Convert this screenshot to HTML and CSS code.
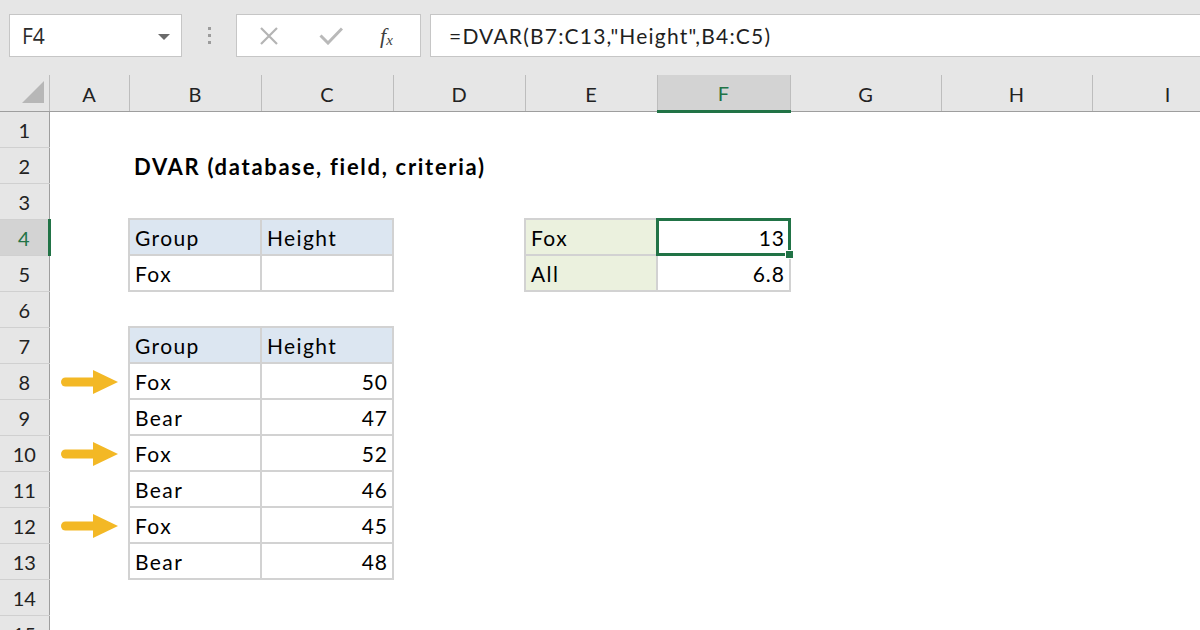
FILE: index.html
```html
<!DOCTYPE html>
<html lang="en">
<head>
    <meta charset="UTF-8">
    <title>DVAR example</title>
    <link rel="stylesheet" href="styles.css">
</head>
<body>
    <div class="formula-bar">
        <div class="name-box">
            <span>F4</span>
            <span class="caret"></span>
        </div>
        <div class="grip"><i></i><i></i><i></i></div>
        <div class="fx-buttons">
            <svg class="btn-cancel" width="20" height="20" viewBox="0 0 20 20">
                <path d="M2 2 L18 18 M18 2 L2 18" stroke="#b4b4b4" stroke-width="2.2" fill="none"/>
            </svg>
            <svg class="btn-enter" width="24" height="18" viewBox="0 0 24 18">
                <path d="M1.5 8.5 L9 16 L23 1.5" stroke="#b9b9b9" stroke-width="3" fill="none"/>
            </svg>
            <span class="fx">f<sub>x</sub></span>
        </div>
        <div class="formula">=DVAR(B7:C13,"Height",B4:C5)</div>
    </div>

    <div class="sheet-wrap">
        <table class="sheet">
            <colgroup>
                <col class="c-rh"><col class="c-a"><col class="c-std"><col class="c-std"><col class="c-std"><col class="c-std"><col class="c-f"><col class="c-wide"><col class="c-wide"><col class="c-wide">
            </colgroup>
            <tr class="col-heads">
                <th class="corner"><span class="select-all"></span></th>
                <th>A</th><th>B</th><th>C</th><th>D</th><th>E</th><th class="sel">F</th><th>G</th><th>H</th><th>I</th>
            </tr>
            <tr><th class="rh">1</th><td></td><td></td><td></td><td></td><td></td><td></td><td></td><td></td><td></td></tr>
            <tr><th class="rh">2</th><td></td><td class="title">DVAR (database, field, criteria)</td><td></td><td></td><td></td><td></td><td></td><td></td><td></td></tr>
            <tr><th class="rh">3</th><td></td><td></td><td></td><td></td><td></td><td></td><td></td><td></td><td></td></tr>
            <tr><th class="rh sel">4</th><td></td><td class="box head">Group</td><td class="box head">Height</td><td></td><td class="box crit">Fox</td><td class="box num active">13</td><td></td><td></td><td></td></tr>
            <tr><th class="rh">5</th><td></td><td class="box">Fox</td><td class="box"></td><td></td><td class="box crit">All</td><td class="box num">6.8</td><td></td><td></td><td></td></tr>
            <tr><th class="rh">6</th><td></td><td></td><td></td><td></td><td></td><td></td><td></td><td></td><td></td></tr>
            <tr><th class="rh">7</th><td></td><td class="box head">Group</td><td class="box head">Height</td><td></td><td></td><td></td><td></td><td></td><td></td></tr>
            <tr><th class="rh">8</th><td class="mark"><svg class="arrow" width="58" height="26" viewBox="0 0 58 26"><path d="M4.5 13 H36" stroke="#f3b825" stroke-width="9" stroke-linecap="round"/><path d="M32 1 L57 13 L32 25 Z" fill="#f3b825"/></svg></td><td class="box">Fox</td><td class="box num">50</td><td></td><td></td><td></td><td></td><td></td><td></td></tr>
            <tr><th class="rh">9</th><td></td><td class="box">Bear</td><td class="box num">47</td><td></td><td></td><td></td><td></td><td></td><td></td></tr>
            <tr><th class="rh">10</th><td class="mark"><svg class="arrow" width="58" height="26" viewBox="0 0 58 26"><path d="M4.5 13 H36" stroke="#f3b825" stroke-width="9" stroke-linecap="round"/><path d="M32 1 L57 13 L32 25 Z" fill="#f3b825"/></svg></td><td class="box">Fox</td><td class="box num">52</td><td></td><td></td><td></td><td></td><td></td><td></td></tr>
            <tr><th class="rh">11</th><td></td><td class="box">Bear</td><td class="box num">46</td><td></td><td></td><td></td><td></td><td></td><td></td></tr>
            <tr><th class="rh">12</th><td class="mark"><svg class="arrow" width="58" height="26" viewBox="0 0 58 26"><path d="M4.5 13 H36" stroke="#f3b825" stroke-width="9" stroke-linecap="round"/><path d="M32 1 L57 13 L32 25 Z" fill="#f3b825"/></svg></td><td class="box">Fox</td><td class="box num">45</td><td></td><td></td><td></td><td></td><td></td><td></td></tr>
            <tr><th class="rh">13</th><td></td><td class="box">Bear</td><td class="box num">48</td><td></td><td></td><td></td><td></td><td></td><td></td></tr>
            <tr><th class="rh">14</th><td></td><td></td><td></td><td></td><td></td><td></td><td></td><td></td><td></td></tr>
            <tr><th class="rh">15</th><td></td><td></td><td></td><td></td><td></td><td></td><td></td><td></td><td></td></tr>
        </table>
    </div>
</body>
</html>
```

FILE: styles.css
```css
body {
    margin: 0;
    background-color: white;
    font-family: Lato, "Liberation Sans", sans-serif;
    overflow: hidden;
    height: 630px;
}
.formula-bar {
    display: flex;
    align-items: flex-start;
    height: 75px;
    box-sizing: border-box;
    padding: 14px 0 0 9px;
    background-color: #e6e6e6;
}
.name-box {
    width: 173px;
    height: 43px;
    box-sizing: border-box;
    border: 1px solid #c6c6c6;
    background-color: white;
    display: flex;
    align-items: center;
    justify-content: space-between;
    padding: 0 11px 0 12px;
    font-family: "Open Sans", sans-serif;
    font-size: 21px;
    color: #2b2b2b;
}
.caret {
    width: 0;
    height: 0;
    border-left: 6px solid transparent;
    border-right: 6px solid transparent;
    border-top: 6px solid #6a6a6a;
    margin-top: 2px;
}
.grip {
    width: 54px;
    height: 43px;
    display: flex;
    flex-direction: column;
    align-items: center;
    justify-content: center;
    gap: 4px;
}
.grip i {
    width: 3px;
    height: 3px;
    background-color: #9c9c9c;
}
.fx-buttons {
    width: 185px;
    height: 43px;
    box-sizing: border-box;
    border: 1px solid #c6c6c6;
    background-color: white;
    display: flex;
    align-items: center;
}
.btn-cancel { margin-left: 22px; }
.btn-enter { margin-left: 40px; }
.fx {
    margin-left: 37px;
    font-family: "Liberation Serif", serif;
    font-style: italic;
    font-size: 22px;
    color: #3f3f3f;
}
.fx sub {
    font-size: 15px;
    vertical-align: baseline;
    position: relative;
    top: 2px;
}
.formula {
    flex: 1;
    margin-left: 9px;
    height: 43px;
    box-sizing: border-box;
    border: 1px solid #c6c6c6;
    border-right: none;
    background-color: white;
    padding-left: 18px;
    font-size: 21px;
    letter-spacing: 1.2px;
    line-height: 41px;
    color: #1f1f1f;
    white-space: nowrap;
}
.sheet-wrap {
    overflow: hidden;
}
.sheet {
    table-layout: fixed;
    width: 1242px;
    border-collapse: collapse;
    font-size: 20px;
    color: black;
}
.c-rh { width: 49px; }
.c-a { width: 80px; }
.c-std { width: 132px; }
.c-f { width: 133px; }
.c-wide { width: 151px; }
.sheet tr { height: 36px; }
.sheet td {
    padding: 0 4px 4px 5px;
    vertical-align: bottom;
    font-size: 21px;
    letter-spacing: 1.4px;
    line-height: 24px;
    white-space: nowrap;
}
.sheet td.num { letter-spacing: 1px; }
.col-heads { height: 35px; }
.col-heads th {
    background-color: #e6e6e6;
    border-right: 1px solid #bdbdbd;
    border-bottom: 1px solid #9e9e9e;
    font-weight: normal;
    color: #222;
    padding: 2px 0 0 0;
}
.col-heads th.sel {
    background-color: #d3d3d3;
    border-bottom: 3px solid #217346;
    color: #217346;
}
.corner {
    text-align: right;
    vertical-align: bottom;
}
.select-all {
    display: inline-block;
    width: 0;
    height: 0;
    border-left: 22px solid transparent;
    border-bottom: 22px solid #b7b7b7;
    margin: 0 5px 4px 0;
}
.rh {
    background-color: #e6e6e6;
    border-right: 1px solid #9e9e9e;
    border-bottom: 1px solid #d0d0d0;
    font-weight: normal;
    color: #222;
    padding: 2px 0 0 0;
}
.rh.sel {
    background-color: #d3d3d3;
    border-right: 3px solid #217346;
    color: #217346;
}
.sheet td.title {
    font-size: 22px;
    font-weight: bold;
    letter-spacing: 1.7px;
    overflow: visible;
}
.box { border: 2px solid #d2d2d2; }
.head { background-color: #dce6f1; }
.crit { background-color: #ebf1de; }
.num { text-align: right; }
.sheet td.mark {
    text-align: right;
    vertical-align: middle;
    padding: 2px 9px 0 0;
    line-height: 0;
}
.active { position: relative; }
.active::before {
    content: "";
    position: absolute;
    inset: -2px -2px -2px -2px;
    border: 3px solid #217346;
}
.active::after {
    content: "";
    position: absolute;
    right: -5px;
    bottom: -5px;
    width: 7px;
    height: 7px;
    background-color: #217346;
    border: 1px solid white;
}
```
